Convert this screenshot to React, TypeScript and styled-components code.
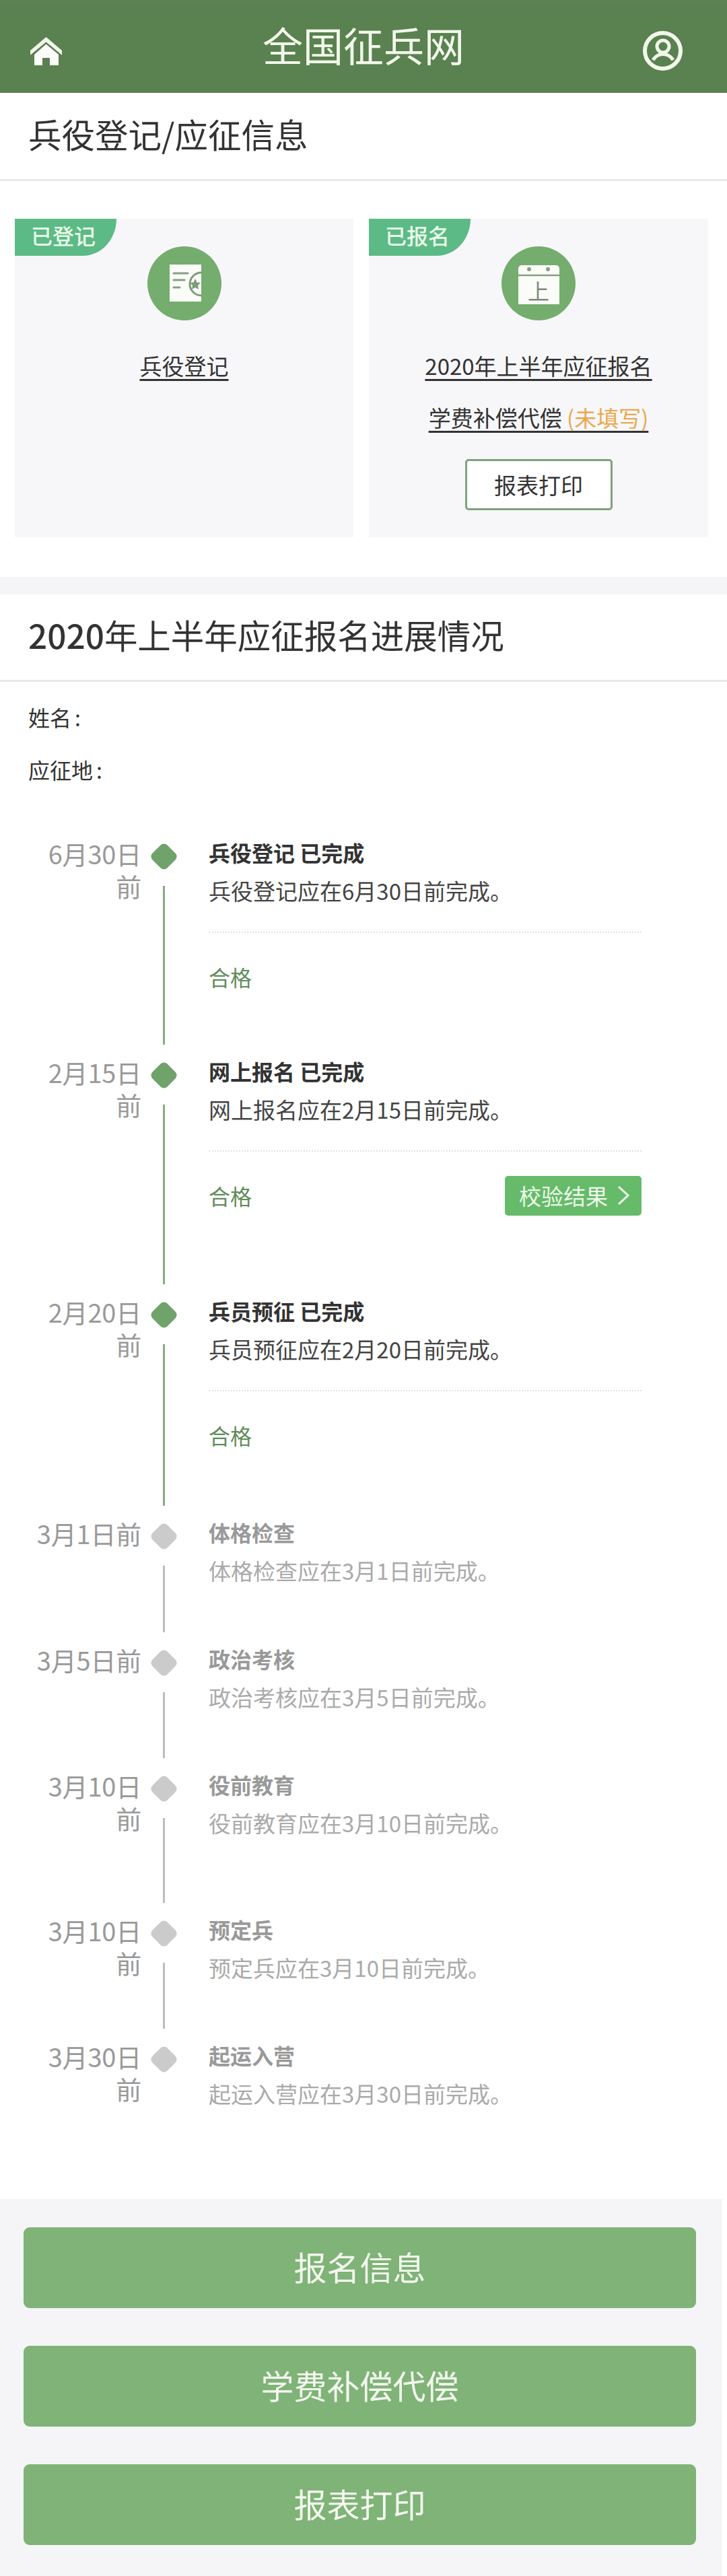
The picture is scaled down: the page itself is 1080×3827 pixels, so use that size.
import React from 'react';
import styled, { createGlobalStyle } from 'styled-components';

const GlobalStyle = createGlobalStyle`
  * {
    box-sizing: border-box;
  }

  body {
    margin: 0;
    background: #fff;
    color: #333;
    font-family: 'Noto Sans CJK SC', 'Noto Sans', sans-serif;
  }
`;

const Page = styled.div`
  width: 1080px;
`;

const Header = styled.header`
  display: grid;
  grid-template-columns: 1fr auto 1fr;
  align-items: center;
  height: 138px;
  padding: 0 66px;
  background: #5a8150;
  border-top: 1px solid #677c60;
  border-bottom: 2px solid #677c60;
  color: #f2f9ea;
`;

const HeaderTitle = styled.div`
  padding-bottom: 6px;
  font-size: 60px;
  line-height: 70px;
`;

const HomeButton = styled.div`
  display: flex;
  justify-self: start;
  margin: 14px 0 0 -21px;
`;

const UserButton = styled.div`
  display: flex;
  justify-self: end;
  margin-top: 14px;
`;

const TitleBar = styled.div`
  display: flex;
  align-items: center;
  height: ${props => props.$height}px;
  padding: 0 0 8px 42px;
  border-bottom: 3px solid #e9e9e9;
  font-size: 49.5px;
  color: #333;
`;

const Year = styled.span`
  font-weight: 500;
`;

const Cards = styled.section`
  display: grid;
  grid-template-columns: 503px 504px;
  column-gap: 23px;
  padding: 56px 28px 59px 22px;
`;

const Card = styled.div`
  position: relative;
  display: flex;
  flex-direction: column;
  align-items: center;
  height: 473px;
  padding-top: 41px;
  background: #f7f7f9;
`;

const Badge = styled.div`
  position: absolute;
  top: 0;
  left: 0;
  width: 151px;
  height: 55px;
  padding-left: 24px;
  background: #5cba86;
  border-bottom-right-radius: 50px 55px;
  color: #eafbe9;
  font-size: 32px;
  font-weight: 500;
  line-height: 49px;
`;

const CardIcon = styled.svg`
  display: block;
  margin-bottom: 45px;
`;

const CardLink = styled.a`
  display: block;
  margin-bottom: 33px;
  color: #333;
  font-size: 33px;
  line-height: 44px;
  text-decoration: underline;
  text-decoration-color: #333;
  text-decoration-thickness: 3px;
  text-underline-offset: 6px;
`;

const Unfilled = styled.span`
  color: #e9a94f;
`;

const PrintButton = styled.div`
  display: flex;
  align-items: center;
  justify-content: center;
  width: 219px;
  height: 76px;
  margin-top: 7px;
  background: #fff;
  border: 3px solid #7ea37c;
  border-radius: 5px;
  color: #333;
  font-size: 33px;
`;

const Band = styled.div`
  height: 26px;
  background: #f5f5f7;
`;

const InfoRow = styled.div`
  margin-top: ${props => props.$top}px;
  padding-left: 42px;
  color: #333;
  font-size: 32px;
  line-height: 48px;
`;

const Colon = styled.span`
  margin-left: 5px;
`;

const Timeline = styled.section`
  padding: 77px 0 0 45px;
`;

const Step = styled.div`
  display: grid;
  grid-template-columns: 165px 39px 643px;
  height: ${props => props.$height}px;
  column-gap: 14px;
`;

const StepDate = styled.div`
  color: #999;
  font-size: 38px;
  line-height: 48px;
  text-align: right;
  letter-spacing: -0.2px;
`;

const Axis = styled.div`
  display: flex;
  flex-direction: column;
  align-items: center;
`;

const Diamond = styled.div`
  flex: none;
  width: 31px;
  height: 31px;
  margin-top: 13px;
  background: ${props => (props.$done ? '#6fa36b' : '#cbcbcb')};
  border-radius: 7px;
  transform: rotate(45deg);
`;

const AxisLine = styled.div`
  flex: 1;
  width: 3px;
  margin: 28px 0 17px;
  background: ${props => (props.$done ? '#86ad81' : '#bcbcbc')};
`;

const StepBody = styled.div`
  margin-left: 33px;
  width: 643px;
`;

const StepTitle = styled.div`
  margin-bottom: 4px;
  color: ${props => (props.$done ? '#333' : '#999')};
  font-size: 32px;
  font-weight: 700;
  line-height: 44px;
`;

const StepText = styled.div`
  margin-top: 13px;
  color: ${props => (props.$done ? '#444' : '#aaa')};
  font-size: 33px;
  line-height: 44px;
`;

const StepResult = styled.div`
  display: flex;
  align-items: center;
  justify-content: space-between;
  height: 97px;
  margin-top: 39px;
  padding-top: 35px;
  border-top: 2px dotted #e2e2e2;
  color: #5f8c5a;
  font-size: 32px;
`;

const VerifyButton = styled.div`
  display: flex;
  align-items: center;
  gap: 14px;
  width: 203px;
  height: 59px;
  padding-left: 21px;
  background: #66bb6a;
  border-radius: 5px;
  color: #eef8ea;
  font-size: 33px;
`;

const Footer = styled.footer`
  display: flex;
  flex-direction: column;
  gap: 56px;
  margin-right: 7px;
  padding: 42px 39px 46px 35px;
  background: #f5f5f7;
`;

const FooterButton = styled.div`
  display: flex;
  align-items: center;
  justify-content: center;
  height: 120px;
  padding-bottom: 5px;
  background: #7fb377;
  border-radius: 9px;
  color: #f3f8ee;
  font-size: 49px;
`;

const HomeIcon = () => (
  <svg width="47" height="42" viewBox="0 0 47 42">
    <path d="M23.5 0 47 20v7L23.5 7.5 0 27v-7z" fill="#eef8e6" />
    <path d="M23.5 10.500 42 26v16H29V31H18v11H6V26z" fill="#fbfdf8" />
    <path d="M1 27.500 23.500 9 46 27.500" fill="none" stroke="#667560" strokeWidth="2" />
    <rect x="18" y="31" width="11" height="3" fill="#667560" />
  </svg>
);

const UserIcon = () => (
  <svg width="59" height="59" viewBox="0 0 59 59" fill="none" stroke="#f2f9ea">
    <circle cx="29.500" cy="29.500" r="26.500" strokeWidth="6" />
    <circle cx="30" cy="23" r="9" strokeWidth="5" />
    <path d="M15 43C19 37 24 34.500 30 34.500S41 37 45 43" strokeWidth="5" />
  </svg>
);

const DocIcon = () => (
  <CardIcon width="110" height="110" viewBox="0 0 110 110">
    <circle cx="55" cy="55" r="55" fill="#74ad6e" />
    <rect x="33" y="27" width="47" height="55" fill="#fbfcf8" />
    <g stroke="#85a082" strokeWidth="3" strokeLinecap="round">
      <path d="M39 40h21M39 50h16M39 61h9" />
    </g>
    <path d="M80 39A17 17 0 1 0 80 73" fill="#fbfcf8" stroke="#7c9c78" strokeWidth="3" />
    <path d="M71 48l2.500 5.500 5.500 .5-4 4 1 6-5-3-5 3 1-6-4-4 5.500-.5z" fill="#7c9c78" />
  </CardIcon>
);

const CalendarIcon = () => (
  <CardIcon width="110" height="110" viewBox="0 0 110 110">
    <circle cx="55" cy="55" r="55" fill="#74ad6e" />
    <path d="M25 33a5 5 0 0 1 5-5h51a5 5 0 0 1 5 5v53H25z" fill="#fbfcf8" />
    <path d="M25 43h61" stroke="#85a082" strokeWidth="2.500" />
    <circle cx="41" cy="34" r="3" fill="#85a082" />
    <circle cx="69" cy="34" r="3" fill="#85a082" />
    <text x="55" y="79" textAnchor="middle" fontSize="32" fill="#7d8a7a">
      上
    </text>
  </CardIcon>
);

const steps = [
  { date: '6月30日前', title: '兵役登记 已完成', text: '兵役登记应在6月30日前完成。', done: true, height: 325 },
  { date: '2月15日前', title: '网上报名 已完成', text: '网上报名应在2月15日前完成。', done: true, height: 356, verify: true },
  { date: '2月20日前', title: '兵员预征 已完成', text: '兵员预征应在2月20日前完成。', done: true, height: 329 },
  { date: '3月1日前', title: '体格检查', text: '体格检查应在3月1日前完成。', height: 188 },
  { date: '3月5日前', title: '政治考核', text: '政治考核应在3月5日前完成。', height: 187 },
  { date: '3月10日前', title: '役前教育', text: '役前教育应在3月10日前完成。', height: 215 },
  { date: '3月10日前', title: '预定兵', text: '预定兵应在3月10日前完成。', height: 187 },
  { date: '3月30日前', title: '起运入营', text: '起运入营应在3月30日前完成。', height: 236, last: true },
];

const App = () => {
  return (
    <Page>
      <GlobalStyle />
      <Header>
        <HomeButton>
          <HomeIcon />
        </HomeButton>
        <HeaderTitle>全国征兵网</HeaderTitle>
        <UserButton>
          <UserIcon />
        </UserButton>
      </Header>

      <TitleBar $height={131}>兵役登记/应征信息</TitleBar>
      <Cards>
        <Card>
          <Badge>已登记</Badge>
          <DocIcon />
          <CardLink>兵役登记</CardLink>
        </Card>
        <Card>
          <Badge>已报名</Badge>
          <CalendarIcon />
          <CardLink>2020年上半年应征报名</CardLink>
          <CardLink>
            学费补偿代偿 <Unfilled>(未填写)</Unfilled>
          </CardLink>
          <PrintButton>报表打印</PrintButton>
        </Card>
      </Cards>
      <Band />

      <TitleBar $height={130}>
        <span>
          <Year>2020</Year>年上半年应征报名进展情况
        </span>
      </TitleBar>
      <InfoRow $top={28}>
        姓名<Colon>:</Colon>
      </InfoRow>
      <InfoRow $top={30}>
        应征地<Colon>:</Colon>
      </InfoRow>

      <Timeline>
        {steps.map(step => (
          <Step key={step.title} $height={step.height}>
            <StepDate>{step.date}</StepDate>
            <Axis>
              <Diamond $done={step.done} />
              {!step.last && <AxisLine $done={step.done} />}
            </Axis>
            <StepBody>
              <StepTitle $done={step.done}>{step.title}</StepTitle>
              <StepText $done={step.done}>{step.text}</StepText>
              {step.done && (
                <StepResult>
                  合格
                  {step.verify && (
                    <VerifyButton>
                      校验结果
                      <svg width="18" height="28" viewBox="0 0 18 28" fill="none" stroke="#eef8ea" strokeWidth="3">
                        <path d="M2 1l14 13L2 27" />
                      </svg>
                    </VerifyButton>
                  )}
                </StepResult>
              )}
            </StepBody>
          </Step>
        ))}
      </Timeline>

      <Footer>
        <FooterButton>报名信息</FooterButton>
        <FooterButton>学费补偿代偿</FooterButton>
        <FooterButton>报表打印</FooterButton>
      </Footer>
    </Page>
  );
};

export default App;
